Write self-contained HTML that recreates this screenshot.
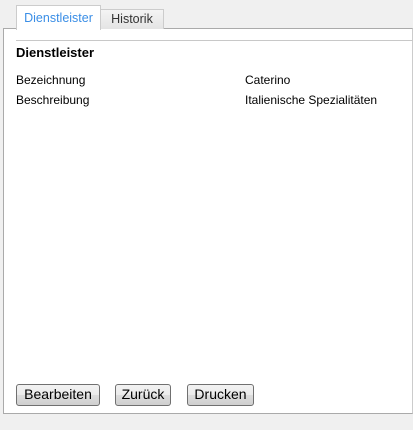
<!DOCTYPE html>
<html><head><style>
body{margin:0;width:413px;height:430px;background:#f0f0f0;position:relative;overflow:hidden;font-family:"Liberation Sans",sans-serif;font-size:12px;color:#000}
.panel{position:absolute;left:3px;top:28px;width:408px;height:384px;background:#fff;border:1px solid #aaa;border-right:1px solid #ccc}
.tab{position:absolute;font-size:12.5px;text-align:center;box-sizing:border-box}
.t1{left:16px;top:5px;width:85px;height:25px;background:#fff;border:1px solid #ccc;border-bottom:none;color:#3a8ee6;line-height:24px;z-index:2}
.t2{left:100px;top:9px;width:64px;height:20px;background:linear-gradient(#f4f4f4,#e4e4e4);border:1px solid #ccc;border-bottom:none;color:#333;line-height:18px}
.sep{position:absolute;left:16px;right:0;top:40px;height:1px;background:#c8c8c8}
.t{position:absolute;white-space:nowrap}
.btn{position:absolute;top:384px;height:22px;box-sizing:border-box;border:1px solid #707070;border-radius:3px;background:linear-gradient(#f2f2f2,#ebebeb 50%,#dddddd 51%,#cfcfcf);font-size:14px;text-align:center;line-height:19px}
</style></head><body>
<div class="panel"></div>
<div class="tab t1">Dienstleister</div>
<div class="tab t2">Historik</div>
<div class="sep"></div>
<div class="t" style="left:16px;top:45px;font-weight:bold;font-size:13px">Dienstleister</div>
<div class="t" style="left:16px;top:73px">Bezeichnung</div>
<div class="t" style="left:16px;top:93px">Beschreibung</div>
<div class="t" style="left:245px;top:73px">Caterino</div>
<div class="t" style="left:245px;top:93px">Italienische Spezialitäten</div>
<div class="btn" style="left:16px;width:84px">Bearbeiten</div>
<div class="btn" style="left:115px;width:56px">Zurück</div>
<div class="btn" style="left:187px;width:67px">Drucken</div>
</body></html>
